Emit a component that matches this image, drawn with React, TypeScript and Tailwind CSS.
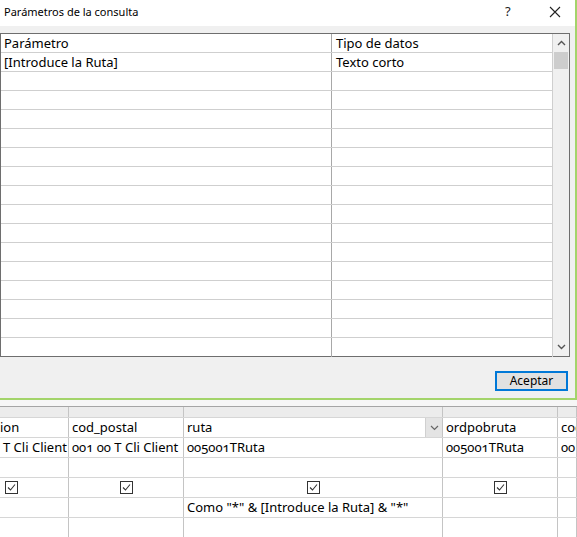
import React from "react";

const ui = { fontFamily: '"Noto Sans", "Open Sans", sans-serif' };
const grid = { fontFamily: '"Noto Sans", Lato, sans-serif' };

function Check() {
  return (
    <div className="w-[13px] h-[13px] border border-[#333] bg-white flex items-center justify-center">
      <svg width="11" height="11" viewBox="0 0 11 11">
        <path d="M2 5.5 L4.5 8 L9 2.5" fill="none" stroke="#333" strokeWidth="1.1" />
      </svg>
    </div>
  );
}

const dialogRows = Array.from({ length: 15 });

export default function App() {
  const cols = ["w-[69px]", "w-[115px]", "w-[259px]", "w-[115px]", "flex-1"];
  const row = (cells: React.ReactNode[], extra = "") => (
    <div className={`flex h-[20px] border-b border-[#d6d6d6] ${extra}`}>
      {cells.map((c, i) => (
        <div key={i} className={`${cols[i]} shrink-0 border-r border-[#c4c4c4] h-full relative overflow-hidden whitespace-nowrap`}>
          {c}
        </div>
      ))}
    </div>
  );
  return (
    <div className="w-[577px] h-[537px] overflow-hidden bg-white flex flex-col text-black">
      {/* Dialog */}
      <div className="h-[400px] shrink-0 flex flex-col border-r-2 border-b-2 border-[#a3d46a] w-[577px] bg-[#f0f0f0]" style={ui}>
        <div className="h-[26px] bg-white flex items-center pl-[4px] pb-[2px] shrink-0">
          <span className="text-[11px] flex-1">Parámetros de la consulta</span>
          <span className="text-[13px] w-[10px] mr-[34px] text-[#222]">?</span>
          <svg width="12" height="12" viewBox="0 0 12 12" className="mr-[14px]">
            <path d="M1 1 L11 11 M11 1 L1 11" stroke="#222" strokeWidth="1.1" />
          </svg>
        </div>
        <div className="h-[7px] shrink-0" />
        <div className="w-[570px] h-[324px] border border-[#6e6e6e] bg-white flex shrink-0">
          <div className="flex-1 flex flex-col text-[13px]">
            <div className="flex h-[19px] border-b border-[#cfcfcf] shrink-0">
              <div className="w-[331px] border-r border-[#a8a8a8] pl-[3px] leading-[18px]">Parámetro</div>
              <div className="flex-1 border-r border-[#cfcfcf] pl-[4px] leading-[18px]">Tipo de datos</div>
            </div>
            <div className="flex h-[19px] border-b border-[#cfcfcf] shrink-0">
              <div className="w-[331px] border-r border-[#a8a8a8] pl-[3px] leading-[18px]">[Introduce la Ruta]</div>
              <div className="flex-1 border-r border-[#cfcfcf] pl-[4px] leading-[18px]">Texto corto</div>
            </div>
            {dialogRows.map((_, i) => (
              <div key={i} className={`flex h-[19px] shrink-0 ${i < 14 ? "border-b border-[#cfcfcf]" : ""}`}>
                <div className="w-[331px] border-r border-[#a8a8a8]" />
                <div className="flex-1 border-r border-[#cfcfcf]" />
              </div>
            ))}
          </div>
          <div className="w-[16px] flex flex-col bg-[#f0f0f0]">
            <div className="h-[18px] flex items-center justify-center">
              <svg width="9" height="6" viewBox="0 0 9 6"><path d="M1 5 L4.5 1.5 L8 5" fill="none" stroke="#555" strokeWidth="1.4" /></svg>
            </div>
            <div className="h-[17px] mx-[1px] bg-[#cdcdcd]" />
            <div className="flex-1" />
            <div className="h-[18px] flex items-center justify-center">
              <svg width="9" height="6" viewBox="0 0 9 6"><path d="M1 1 L4.5 4.5 L8 1" fill="none" stroke="#555" strokeWidth="1.4" /></svg>
            </div>
          </div>
        </div>
        <div className="flex justify-end pr-[7px] pt-[14px]">
          <button className="w-[73px] h-[20px] border-2 border-[#0078d7] bg-[#e1e1e1] text-[12px] leading-[16px] flex items-center justify-center">
            Aceptar
          </button>
        </div>
      </div>
      <div className="h-[6px] bg-[#f6f6f6] shrink-0" />
      {/* Query grid */}
      <div className="flex flex-col border-t border-[#a5a5a5] text-[13px] oldstyle-nums" style={grid}>
        {row([null, null, null, null, null], "h-[11px] bg-[#ececec] !h-[11px]")}
        {row([
          <span className="absolute left-0 top-0 leading-[18px]">ion</span>,
          <span className="absolute left-[3px] top-0 leading-[18px]">cod_postal</span>,
          <>
            <span className="absolute left-[3px] top-0 leading-[18px]">ruta</span>
            <div className="absolute right-0 top-0 w-[17px] h-[19px] bg-[#e4e4e4] border-l border-[#d0d0d0] flex items-center justify-center">
              <svg width="9" height="6" viewBox="0 0 9 6"><path d="M1 1 L4.5 4.5 L8 1" fill="none" stroke="#666" strokeWidth="1.2" /></svg>
            </div>
          </>,
          <span className="absolute left-[3px] top-0 leading-[18px]">ordpobruta</span>,
          <span className="absolute left-[3px] top-0 leading-[18px]">cod</span>,
        ])}
        {row([
          <span className="absolute left-[3px] top-0 leading-[18px]">T Cli Client</span>,
          <span className="absolute left-[3px] top-0 leading-[18px]">001 00 T Cli Client</span>,
          <span className="absolute left-[3px] top-0 leading-[18px]">005001TRuta</span>,
          <span className="absolute left-[3px] top-0 leading-[18px]">005001TRuta</span>,
          <span className="absolute left-[3px] top-0 leading-[18px]">001</span>,
        ])}
        {row([null, null, null, null, null])}
        {row([
          <div className="absolute left-[5px] top-[3px]"><Check /></div>,
          <div className="absolute inset-0 flex items-center justify-center"><Check /></div>,
          <div className="absolute inset-0 flex items-center justify-center"><Check /></div>,
          <div className="absolute inset-0 flex items-center justify-center"><Check /></div>,
          null,
        ])}
        {row([
          null,
          null,
          <span className="absolute left-[3px] top-0 leading-[18px]">Como "*" &amp; [Introduce la Ruta] &amp; "*"</span>,
          null,
          null,
        ])}
        {row([null, null, null, null, null])}
      </div>
    </div>
  );
}
